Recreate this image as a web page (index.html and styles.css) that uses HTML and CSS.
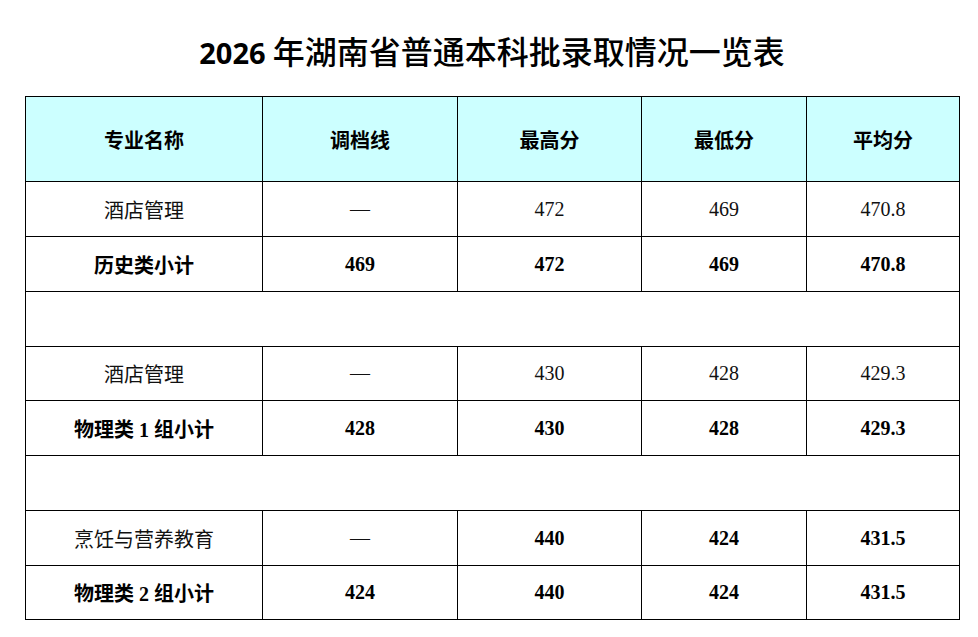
FILE: index.html
```html
<!DOCTYPE html>
<html lang="zh-CN">
<head>
<meta charset="utf-8">
<title>2026年湖南省普通本科批录取情况一览表</title>
<link rel="stylesheet" href="styles.css">
</head>
<body>
<div class="page">
  <h1 class="title"><span class="year">2026</span> 年湖南省普通本科批录取情况一览表</h1>
  <table class="grid">
    <colgroup>
      <col class="c1"><col class="c2"><col class="c3"><col class="c4"><col class="c5">
    </colgroup>
    <thead>
      <tr class="head">
        <th>专业名称</th><th>调档线</th><th>最高分</th><th>最低分</th><th>平均分</th>
      </tr>
    </thead>
    <tbody>
      <tr class="row">
        <td>酒店管理</td><td>—</td><td>472</td><td>469</td><td>470.8</td>
      </tr>
      <tr class="row bold">
        <td>历史类小计</td><td>469</td><td>472</td><td>469</td><td>470.8</td>
      </tr>
      <tr class="row"><td colspan="5"></td></tr>
      <tr class="row short">
        <td>酒店管理</td><td>—</td><td>430</td><td>428</td><td>429.3</td>
      </tr>
      <tr class="row bold">
        <td>物理类 1 组小计</td><td>428</td><td>430</td><td>428</td><td>429.3</td>
      </tr>
      <tr class="row"><td colspan="5"></td></tr>
      <tr class="row">
        <td>烹饪与营养教育</td><td>—</td><td class="b">440</td><td class="b">424</td><td class="b">431.5</td>
      </tr>
      <tr class="row bold short">
        <td>物理类 2 组小计</td><td>424</td><td>440</td><td>424</td><td>431.5</td>
      </tr>
    </tbody>
  </table>
</div>
</body>
</html>
```
FILE: styles.css
```css
html, body {
  margin: 0;
  padding: 0;
  background: #ffffff;
}

.page {
  width: 978px;
  padding-left: 25px;
  box-sizing: border-box;
  font-family: "Liberation Serif", "Noto Sans CJK SC", serif;
  color: #000;
}

.title {
  margin: 0;
  padding-top: 30px;
  height: 66px;
  line-height: 40px;
  width: 934px;
  text-align: center;
  font-family: "Noto Sans CJK SC", sans-serif;
  font-size: 32px;
  font-weight: 500;
  color: #000;
}

.title .year {
  font-family: "Open Sans", "Liberation Sans", sans-serif;
  font-weight: 700;
  font-size: 29px;
}

.grid {
  border-collapse: collapse;
  table-layout: fixed;
  width: 934px;
}

.grid .c1 { width: 237px; }
.grid .c2 { width: 195px; }
.grid .c3 { width: 184px; }
.grid .c4 { width: 165px; }
.grid .c5 { width: 153px; }

.grid th,
.grid td {
  border: 1px solid #000;
  padding: 0;
  text-align: center;
  vertical-align: middle;
  font-size: 20px;
  white-space: nowrap;
}

.head {
  height: 85px;
  background: #ccffff;
}

.head th {
  font-weight: 700;
}

.row {
  height: 55px;
}

.row.short {
  height: 54px;
}

.row td {
  font-weight: 400;
  color: #111;
}

.row.bold td,
.row td.b {
  font-weight: 700;
  color: #000;
}
```
